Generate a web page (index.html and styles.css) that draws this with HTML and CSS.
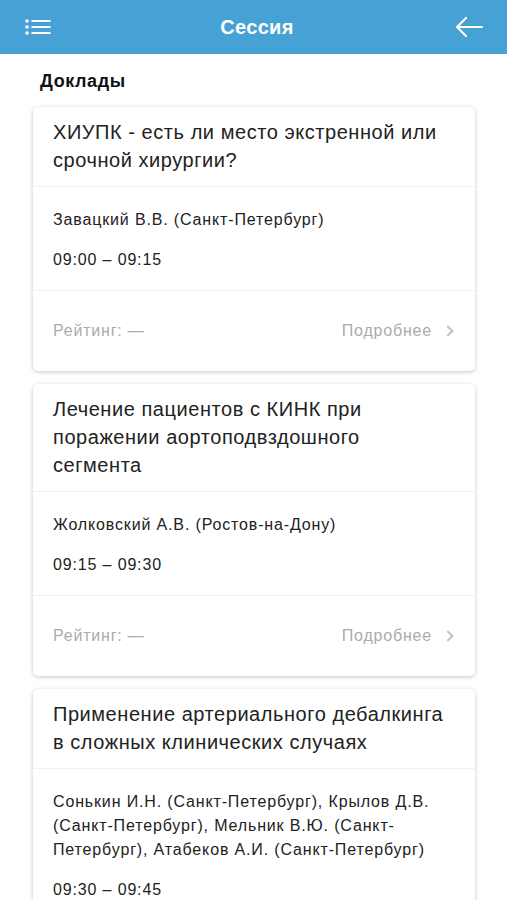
FILE: index.html
```html
<!DOCTYPE html>
<html lang="ru">
<head>
    <meta charset="UTF-8">
    <meta name="viewport" content="width=device-width, initial-scale=1.0">
    <title>Сессия</title>
    <link rel="stylesheet" href="styles.css">
</head>
<body>

    <header class="topbar">
        <svg class="icon menu" width="26" height="16" viewBox="0 0 26 16">
            <circle cx="2" cy="2" r="1.8" fill="#fff"/>
            <circle cx="2" cy="8" r="1.8" fill="#fff"/>
            <circle cx="2" cy="14" r="1.8" fill="#fff"/>
            <rect x="6.5" y="1" width="19" height="2" fill="#fff"/>
            <rect x="6.5" y="7" width="19" height="2" fill="#fff"/>
            <rect x="6.5" y="13" width="19" height="2" fill="#fff"/>
        </svg>
        <h1 class="title">Сессия</h1>
        <svg class="icon back" width="28" height="22" viewBox="0 0 28 22">
            <path d="M27 11H2M11 2L2 11l9 9" fill="none" stroke="#fff" stroke-width="2.2" stroke-linecap="round" stroke-linejoin="round"/>
        </svg>
    </header>

    <main class="content">
        <h2 class="section">Доклады</h2>

        <div class="card">
            <div class="card-title">ХИУПК - есть ли место экстренной или срочной хирургии?</div>
            <div class="card-body">
                <p class="authors">Завацкий В.В. (Санкт-Петербург)</p>
                <p class="time">09:00 – 09:15</p>
            </div>
            <div class="card-foot">
                <span>Рейтинг: —</span>
                <span class="more">Подробнее <i class="chev"></i></span>
            </div>
        </div>

        <div class="card">
            <div class="card-title">Лечение пациентов с КИНК при поражении аортоподвздошного сегмента</div>
            <div class="card-body">
                <p class="authors">Жолковский А.В. (Ростов-на-Дону)</p>
                <p class="time">09:15 – 09:30</p>
            </div>
            <div class="card-foot">
                <span>Рейтинг: —</span>
                <span class="more">Подробнее <i class="chev"></i></span>
            </div>
        </div>

        <div class="card">
            <div class="card-title">Применение артериального дебалкинга в сложных клинических случаях</div>
            <div class="card-body">
                <p class="authors">Сонькин И.Н. (Санкт-Петербург), Крылов Д.В. (Санкт-Петербург), Мельник В.Ю. (Санкт-Петербург), Атабеков А.И. (Санкт-Петербург)</p>
                <p class="time">09:30 – 09:45</p>
            </div>
            <div class="card-foot">
                <span>Рейтинг: —</span>
                <span class="more">Подробнее <i class="chev"></i></span>
            </div>
        </div>
    </main>

</body>
</html>
```

FILE: styles.css
```css
*{
    margin: 0;
    padding: 0;
    box-sizing: border-box;
}
body{
    font-family: "Liberation Sans", Arial, sans-serif;
    color: #222;
    background: #fff;
    overflow: hidden;
    height: 900px;
}
.topbar{
    display: flex;
    align-items: center;
    justify-content: space-between;
    height: 54px;
    padding: 0 24px 0 25px;
    background-color: #46a1d4;
}
.title{
    font-size: 20px;
    font-weight: bold;
    letter-spacing: 0.3px;
    color: #fff;
    margin-left: 8px;
}
.content{
    padding: 0 32px 0 33px;
}
.section{
    font-size: 18px;
    font-weight: bold;
    letter-spacing: 0.6px;
    padding: 17px 0 15px 7px;
    color: #111;
}
.card{
    background: #fff;
    border-radius: 5px;
    box-shadow: 0 1px 4px rgba(0, 0, 0, 0.22);
    margin-bottom: 13px;
}
.card-title{
    font-size: 20px;
    letter-spacing: 0.55px;
    line-height: 28px;
    padding: 11px 26px 12px 20px;
    border-bottom: 1px solid #f0f0f0;
}
.card-body{
    display: flex;
    flex-direction: column;
    gap: 17px;
    padding: 21px 20px 19px;
    border-bottom: 1px solid #f0f0f0;
    font-size: 16px;
    letter-spacing: 0.85px;
}
.authors{
    line-height: 24px;
}
.time{
    line-height: 22px;
}
.card-foot{
    display: flex;
    justify-content: space-between;
    align-items: center;
    height: 80px;
    padding: 0 20px;
    font-size: 16px;
    letter-spacing: 0.8px;
    color: #ababab;
}
.more{
    display: flex;
    align-items: center;
    gap: 12px;
}
.chev{
    display: block;
    width: 8px;
    height: 8px;
    border-top: 2px solid #c4c4c4;
    border-right: 2px solid #c4c4c4;
    transform: rotate(45deg);
    margin-right: 3px;
}
```
